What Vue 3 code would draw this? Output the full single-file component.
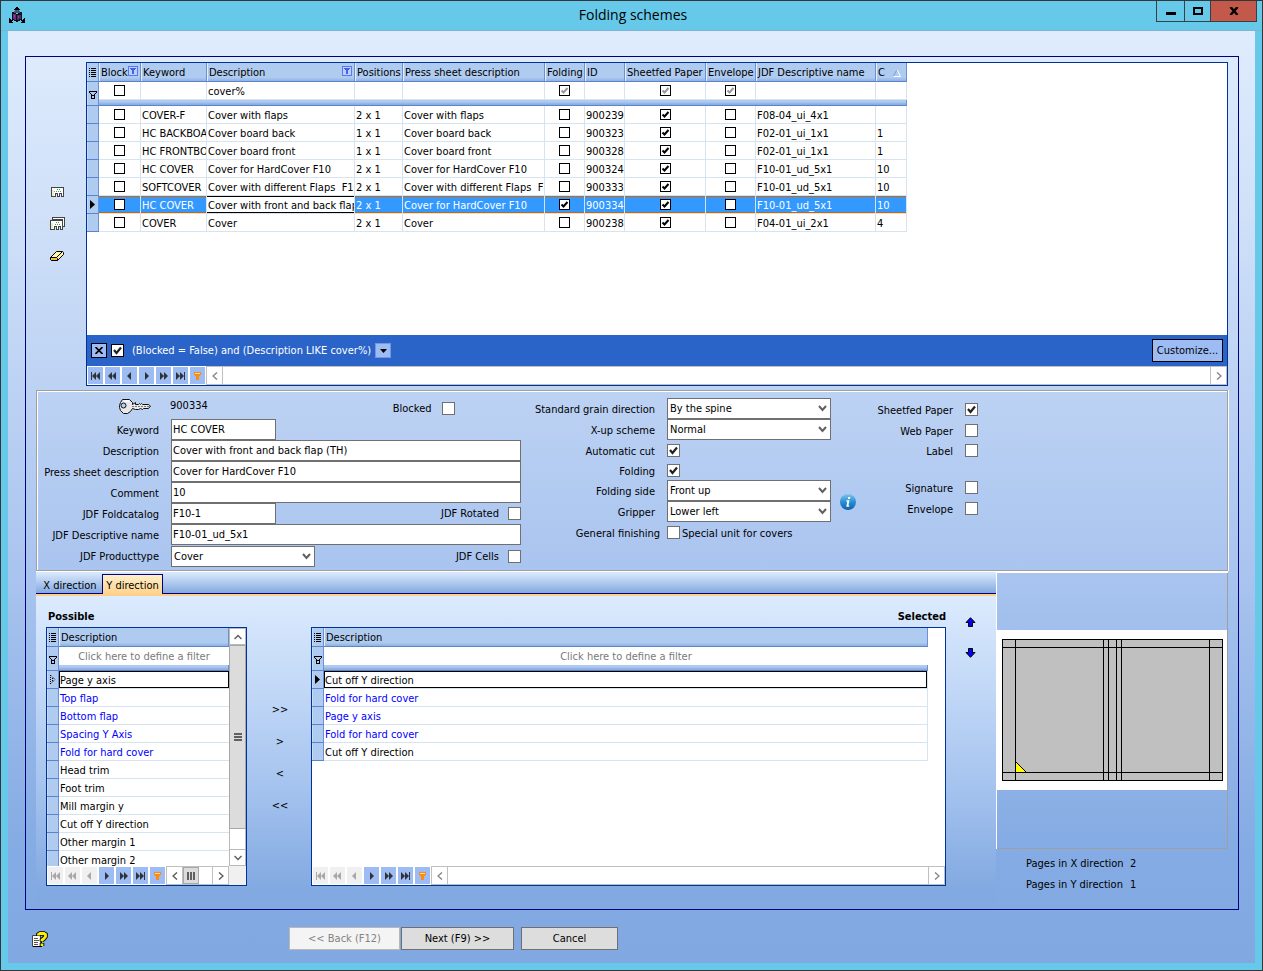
<script setup>
const columns = [
  { key: 'block', label: 'Block', width: 42, type: 'check', filtered: true },
  { key: 'keyword', label: 'Keyword', width: 66 },
  { key: 'description', label: 'Description', width: 148, filtered: true },
  { key: 'positions', label: 'Positions', width: 48 },
  { key: 'press', label: 'Press sheet description', width: 142 },
  { key: 'folding', label: 'Folding', width: 40, type: 'check' },
  { key: 'id', label: 'ID', width: 40 },
  { key: 'sheetfed', label: 'Sheetfed Paper', width: 81, type: 'check' },
  { key: 'envelope', label: 'Envelope', width: 50, type: 'check' },
  { key: 'jdf', label: 'JDF Descriptive name', width: 120 },
  { key: 'c', label: 'C', width: 31, sorted: true },
]

const filterRow = { description: 'cover%' }

const make = (keyword, description, positions, press, id, jdf, c, extra = {}) => ({
  keyword, description, positions, press, id, jdf, c, sheetfed: true, ...extra,
})

const schemes = [
  make('COVER-F', 'Cover with flaps', '2 x 1', 'Cover with flaps', '900239', 'F08-04_ui_4x1', ''),
  make('HC BACKBOARD', 'Cover board back', '1 x 1', 'Cover board back', '900323', 'F02-01_ui_1x1', '1'),
  make('HC FRONTBOARD', 'Cover board front', '1 x 1', 'Cover board front', '900328', 'F02-01_ui_1x1', '1'),
  make('HC COVER', 'Cover for HardCover F10', '2 x 1', 'Cover for HardCover F10', '900324', 'F10-01_ud_5x1', '10'),
  make('SOFTCOVER', 'Cover with different Flaps  F1', '2 x 1', 'Cover with different Flaps  F', '900333', 'F10-01_ud_5x1', '10'),
  make('HC COVER', 'Cover with front and back flap', '2 x 1', 'Cover for HardCover F10', '900334', 'F10-01_ud_5x1', '10', { folding: true, selected: true }),
  make('COVER', 'Cover', '2 x 1', 'Cover', '900238', 'F04-01_ui_2x1', '4'),
]

const nav = [
  { label: 'First', path: 'M3 5h1v8H3z M8 5v8L4 9z M12 5v8L8 9z', back: true },
  { label: 'Previous page', path: 'M7 5v8L3 9z M11 5v8L7 9z', back: true },
  { label: 'Previous', path: 'M9 5v8L5 9z', back: true },
  { label: 'Next', path: 'M6 5v8l4-4z' },
  { label: 'Next page', path: 'M4 5v8l4-4z M8 5v8l4-4z' },
  { label: 'Last', path: 'M3 5v8l4-4z M7 5v8l4-4z M11 5h1v8h-1z' },
]

const textFields = [
  { id: 'keyword', label: 'Keyword', value: 'HC COVER', short: true },
  { id: 'description', label: 'Description', value: 'Cover with front and back flap (TH)' },
  { id: 'press', label: 'Press sheet description', value: 'Cover for HardCover F10' },
  { id: 'comment', label: 'Comment', value: '10' },
  { id: 'foldcatalog', label: 'JDF Foldcatalog', value: 'F10-1', short: true, check: 'JDF Rotated' },
  { id: 'jdfname', label: 'JDF Descriptive name', value: 'F10-01_ud_5x1' },
]

const options = [
  { id: 'grain', label: 'Standard grain direction', select: 'By the spine' },
  { id: 'xup', label: 'X-up scheme', select: 'Normal' },
  { id: 'cut', label: 'Automatic cut', checked: true },
  { id: 'fold', label: 'Folding', checked: true, low: true },
  { id: 'side', label: 'Folding side', select: 'Front up' },
  { id: 'gripper', label: 'Gripper', select: 'Lower left' },
]

const flags = [
  { id: 'sheet', label: 'Sheetfed Paper', checked: true },
  { id: 'web', label: 'Web Paper' },
  { id: 'label', label: 'Label', low: true },
  { id: 'signature', label: 'Signature', spaced: true },
  { id: 'envelope', label: 'Envelope' },
]

const possible = [
  { text: 'Page y axis', current: true },
  { text: 'Top flap', link: true },
  { text: 'Bottom flap', link: true },
  { text: 'Spacing Y Axis', link: true },
  { text: 'Fold for hard cover', link: true },
  { text: 'Head trim' },
  { text: 'Foot trim' },
  { text: 'Mill margin y' },
  { text: 'Cut off Y direction' },
  { text: 'Other margin 1' },
  { text: 'Other margin 2' },
]

const selected = [
  { text: 'Cut off Y direction', current: true },
  { text: 'Fold for hard cover', link: true },
  { text: 'Page y axis', link: true },
  { text: 'Fold for hard cover', link: true },
  { text: 'Cut off Y direction' },
]

const moves = ['>>', '>', '<', '<<']
const sheetX = [18, 106, 111, 119, 124, 212]
const sheetY = [17, 142]
</script>

<template>
  <div class="window">
    <header class="titlebar">
      <svg class="app-icon" width="16" height="16" viewBox="0 0 16 16" shape-rendering="crispEdges" aria-hidden="true">
        <path fill="#000" d="M7 0h2v1h1v1h1v1H9v2H7V3H5V2h1V1h1z" />
        <path fill="#3a5a78" d="M5 4h6v2H5zM6 3h4v1H6z" />
        <path fill="#111" d="M3 5h2v1h2v1h2V6h2V5h2v8h-2v1H9v1H7v-1H5v-1H3z" />
        <path fill="#6b2a86" d="M4 7h3v6H5v-1H4z" />
        <path fill="#4b2a7a" d="M8 8h4v4h-2v1H8z" />
        <path fill="#a83a78" d="M5 8h1v2H5zM9 9h1v2H9z" />
        <path fill="#000" d="M0 11h1v1h1v1h1v-1h1v2H3v1h1v1H0zM16 11h-1v1h-1v1h-1v-1h-1v2h1v1h-1v1h4z" />
      </svg>
      <h1 class="title">Folding schemes</h1>
      <div class="win-buttons">
        <button type="button" class="win-btn min" aria-label="Minimize"><span class="min-mark"></span></button>
        <button type="button" class="win-btn max" aria-label="Maximize"><span class="max-mark"></span></button>
        <button type="button" class="win-btn close" aria-label="Close">
          <svg width="10" height="8" viewBox="0 0 10 8" aria-hidden="true"><path fill="none" stroke="#000" stroke-width="2.4" d="M1.5 0L8.5 8M8.5 0L1.5 8" /></svg>
        </button>
      </div>
    </header>

    <main class="client">
      <section class="panel">
        <div class="top">
          <div class="tools">
            <button type="button" class="tool" aria-label="Find">
              <svg width="16" height="14" viewBox="0 0 16 14" shape-rendering="crispEdges" aria-hidden="true">
                <path fill="#fff" stroke="#444" d="M2.500 2.500h12v9h-2v-3h-2v3h-2v-3h-2v3h-4z" />
                <path fill="#eeeec4" d="M3 5h2v6H3z" />
                <path fill="#3aa84a" d="M8 4h1v1H8zM10 4h1v1h-1zM7 6h1v1H7zM9 6h1v1H9zM11 6h1v1h-1z" />
                <path fill="#999" d="M5 6h1v1H5z" />
              </svg>
            </button>
            <button type="button" class="tool" aria-label="Find all">
              <svg width="16" height="14" viewBox="0 0 16 14" shape-rendering="crispEdges" aria-hidden="true">
                <path fill="#fff" stroke="#444" d="M3.500 2.500v-2h12v9h-2v-7z" />
                <path fill="#fff" stroke="#444" d="M1.500 3.500h12v9h-2v-3h-2v3h-2v-3h-2v3h-4z" />
                <path fill="#eeeec4" d="M2 6h2v6H2z" />
                <path fill="#3aa84a" d="M7 5h1v1H7zM9 5h1v1H9zM6 7h1v1H6zM8 7h1v1H8zM10 7h1v1h-1z" />
              </svg>
            </button>
            <button type="button" class="tool" aria-label="Clear">
              <svg width="16" height="14" viewBox="0 0 16 14" aria-hidden="true">
                <path fill="#fff6a8" stroke="#000" d="M1.5 8.5l6-6h6l1 1v2l-6 6h-6l-1-1z" />
                <path fill="#f0c040" stroke="#000" d="M1.5 8.5h6l1 1v2h-6l-1-1z" />
                <path fill="none" stroke="#000" d="M7.5 8.5l6-6" />
              </svg>
            </button>
          </div>

          <div class="grid">
            <div class="grid-body">
              <table class="schemes">
                <colgroup>
                  <col class="ind-col" />
                  <col v-for="c in columns" :key="c.key" :style="{ width: c.width + 'px' }" />
                </colgroup>
                <thead>
                  <tr class="head">
                    <th class="ind" aria-label="Row menu">
                      <svg class="glyph" width="7" height="9" viewBox="0 0 7 9" shape-rendering="crispEdges" aria-hidden="true">
                        <path d="M0 0h1v1H0zM2 0h5v1H2zM0 2h1v1H0zM2 2h5v1H2zM0 4h1v1H0zM2 4h5v1H2zM0 6h1v1H0zM2 6h5v1H2zM0 8h1v1H0zM2 8h5v1H2z" />
                      </svg>
                    </th>
                    <th v-for="c in columns" :key="c.key" scope="col">
                      <div class="th-in">
                        <span>{{ c.label }}</span>
                        <svg v-if="c.filtered" width="10" height="10" viewBox="0 0 10 10" shape-rendering="crispEdges" aria-hidden="true">
                          <path fill="#bcd0fa" stroke="#5a78f0" d="M.5.5h9v9h-9z" />
                          <path fill="#4560e8" d="M2 2h6v1H7v1H6v4H4V4H3V3H2z" />
                        </svg>
                        <svg v-if="c.sorted" class="sort" width="8" height="8" viewBox="0 0 8 8" aria-hidden="true">
                          <path fill="none" stroke="#7b9be0" d="M.5 7L4 .5" />
                          <path fill="none" stroke="#fff" d="M4 .5L7.500 7.500H.5" />
                        </svg>
                      </div>
                    </th>
                  </tr>
                </thead>
                <tbody>
                  <tr class="filter">
                    <td class="ind" rowspan="2">
                      <svg class="glyph low" width="8" height="8" viewBox="0 0 8 8" shape-rendering="crispEdges" aria-hidden="true">
                        <path d="M0 0h8v2H7v1H6v5H2V3H1V2H0zM1 1v1h6V1zM3 5v2h2V5zM2 2v1h1v1h2V3h1V2z" fill-rule="evenodd" />
                      </svg>
                    </td>
                    <td v-for="c in columns" :key="c.key">
                      <input v-if="c.type === 'check'" type="checkbox" class="cell-check" :class="{ grey: c.key !== 'block' }" :checked="c.key !== 'block'" :aria-label="'Filter ' + c.label" />
                      <div v-else class="cell">{{ filterRow[c.key] }}</div>
                    </td>
                  </tr>
                  <tr class="divider"><td :colspan="columns.length"></td></tr>
                  <tr v-for="(row, i) in schemes" :key="i" class="row" :class="{ selected: row.selected }">
                    <td class="ind">
                      <svg v-if="row.selected" class="glyph" width="5" height="9" viewBox="0 0 5 9" aria-hidden="true"><path d="M0 0v9l5-4.500z" /></svg>
                    </td>
                    <td v-for="c in columns" :key="c.key" :class="{ editing: row.selected && c.key === 'description' }">
                      <input v-if="c.type === 'check'" type="checkbox" class="cell-check" :checked="!!row[c.key]" :aria-label="c.label + ' ' + row.id" />
                      <div v-else class="cell">{{ row[c.key] }}</div>
                    </td>
                  </tr>
                </tbody>
              </table>
            </div>
            <div class="filterbar">
              <button type="button" class="fb-x" aria-label="Clear filter">
                <svg width="8" height="7" viewBox="0 0 8 7" aria-hidden="true"><path fill="none" stroke="#000" stroke-width="1.600" d="M.5 0l7 7M7.500 0l-7 7" /></svg>
              </button>
              <input id="filter-on" type="checkbox" class="box dark" checked />
              <label for="filter-on">(Blocked = False) and (Description LIKE cover%)</label>
              <button type="button" class="fb-drop" aria-label="Recent filters">
                <svg width="7" height="4" viewBox="0 0 7 4" aria-hidden="true"><path d="M0 0h7L3.500 4z" /></svg>
              </button>
              <button type="button" class="customize">Customize...</button>
            </div>
            <div class="navbar">
              <div class="nav-set">
                <button v-for="n in nav" :key="n.label" type="button" class="nav-btn" :aria-label="n.label">
                  <svg width="15" height="17" viewBox="0 0 15 17" aria-hidden="true"><path :d="n.path" /></svg>
                </button>
                <button type="button" class="nav-btn" aria-label="Filter">
                  <svg width="15" height="17" viewBox="0 0 15 17" shape-rendering="crispEdges" aria-hidden="true">
                    <path fill="#ff8a10" d="M4 5h7v3h-1v1H9v4H6V9H5V8H4z" /><path fill="#ffe0a8" d="M5 6h5v1H5z" />
                  </svg>
                </button>
              </div>
              <div class="hscroll">
                <button type="button" class="sc-btn" aria-label="Scroll left"><svg width="6" height="8" viewBox="0 0 6 8" aria-hidden="true"><path d="M5 .5L1 4l4 3.500" /></svg></button>
                <div class="track"></div>
                <button type="button" class="sc-btn" aria-label="Scroll right"><svg width="6" height="8" viewBox="0 0 6 8" aria-hidden="true"><path d="M1 .5L5 4 1 7.500" /></svg></button>
              </div>
            </div>
          </div>
        </div>

        <form class="form" @submit.prevent>
          <div class="col-a">
            <div class="id-row">
              <svg class="key" width="34" height="16" viewBox="0 0 34 16" aria-hidden="true">
                <path fill="#e8e8e8" stroke="#111" d="M4.500 1.500h7l3 3v2l3-2v2h3l1-1 1 1 1-1 1 1h6l2 1.500-2 2.500h-5l-1 1-2-1-2 1h-3l-3-1-2 3-3 2h-4l-3-3-1-3v-2l1-3z" />
                <circle cx="5.500" cy="7.500" r="2.500" fill="#b8cff2" stroke="#111" />
                <path fill="none" stroke="#777" d="M14 8.500h18" stroke-dasharray="2 1" />
                <path fill="none" stroke="#fff" stroke-width="1.500" d="M6 3h5" />
              </svg>
              <output class="id-value">900334</output>
              <label for="blocked" class="r-label">Blocked</label>
              <input id="blocked" type="checkbox" class="box" />
            </div>
            <div v-for="f in textFields" :key="f.id" class="field">
              <label :for="f.id" class="label">{{ f.label }}</label>
              <input :id="f.id" type="text" class="text" :class="{ short: f.short }" :value="f.value" />
              <template v-if="f.check">
                <label for="rotated" class="r-label">{{ f.check }}</label>
                <input id="rotated" type="checkbox" class="box" />
              </template>
            </div>
            <div class="field last">
              <label for="producttype" class="label">JDF Producttype</label>
              <select id="producttype" class="select product"><option>Cover</option></select>
              <label for="cells" class="r-label">JDF Cells</label>
              <input id="cells" type="checkbox" class="box" />
            </div>
          </div>

          <div class="col-b">
            <div v-for="o in options" :key="o.id" class="field" :class="{ low: o.low }">
              <label :for="o.id" class="label">{{ o.label }}</label>
              <select v-if="o.select" :id="o.id" class="select"><option>{{ o.select }}</option></select>
              <input v-else :id="o.id" type="checkbox" class="box" checked />
            </div>
            <div class="field finishing">
              <span class="label">General finishing</span>
              <input id="unit" type="checkbox" class="box" />
              <label for="unit" class="unit">Special unit for covers</label>
            </div>
          </div>

          <svg class="info" width="16" height="16" viewBox="0 0 16 16" role="img" aria-label="Information">
            <defs><linearGradient id="info-fill" x1="0" y1="0" x2="0" y2="1"><stop offset="0" stop-color="#7cc6ee" /><stop offset=".5" stop-color="#2a8fd4" /><stop offset="1" stop-color="#0d5fae" /></linearGradient></defs>
            <circle cx="8" cy="8" r="8" fill="url(#info-fill)" />
            <path fill="#fff" d="M8.300 3h2l-.4 2h-2zM6.500 6.200h3l-1.100 5.300h1l-.3 1.300H6.300l1-5.300h-1z" />
          </svg>

          <div class="col-c">
            <div v-for="f in flags" :key="f.id" class="field" :class="{ spaced: f.spaced, low: f.low }">
              <label :for="f.id" class="label">{{ f.label }}</label>
              <input :id="f.id" type="checkbox" class="box" :checked="f.checked" />
            </div>
          </div>
        </form>

        <div class="bottom">
          <div class="tabpane">
            <div class="tabs" role="tablist">
              <button type="button" role="tab" class="tab" aria-selected="false">X direction</button>
              <button type="button" role="tab" class="tab active" aria-selected="true">Y direction</button>
            </div>
            <div class="lists">
              <h2 class="list-title">Possible</h2>
              <h2 class="list-title right">Selected</h2>

              <div class="list">
                <div class="list-main">
                  <div class="list-view">
                    <table class="items">
                      <colgroup><col class="ind-col" /><col /></colgroup>
                      <thead>
                        <tr class="head">
                          <th class="ind" aria-label="Row menu">
                            <svg class="glyph" width="7" height="9" viewBox="0 0 7 9" shape-rendering="crispEdges" aria-hidden="true">
                              <path d="M0 0h1v1H0zM2 0h5v1H2zM0 2h1v1H0zM2 2h5v1H2zM0 4h1v1H0zM2 4h5v1H2zM0 6h1v1H0zM2 6h5v1H2zM0 8h1v1H0zM2 8h5v1H2z" />
                            </svg>
                          </th>
                          <th scope="col"><div class="th-in"><span>Description</span></div></th>
                        </tr>
                      </thead>
                      <tbody>
                        <tr class="filter">
                          <td class="ind" rowspan="2">
                            <svg class="glyph low" width="8" height="8" viewBox="0 0 8 8" shape-rendering="crispEdges" aria-hidden="true">
                              <path d="M0 0h8v2H7v1H6v5H2V3H1V2H0zM1 1v1h6V1zM3 5v2h2V5zM2 2v1h1v1h2V3h1V2z" fill-rule="evenodd" />
                            </svg>
                          </td>
                          <td class="hint"><div class="cell">Click here to define a filter</div></td>
                        </tr>
                        <tr class="divider"><td></td></tr>
                        <tr v-for="(it, i) in possible" :key="i" class="row">
                          <td class="ind">
                            <svg v-if="it.current" class="glyph" width="6" height="9" viewBox="0 0 6 9" aria-hidden="true"><path fill="none" stroke="#000" stroke-dasharray="1 1" d="M.5 0v9M1 .5l4 4-4 4M2.500 3v3" /></svg>
                          </td>
                          <td :class="{ link: it.link, current: it.current }"><div class="cell">{{ it.text }}</div></td>
                        </tr>
                      </tbody>
                    </table>
                  </div>
                  <div class="vscroll">
                    <button type="button" class="vs-btn" aria-label="Scroll up"><svg width="8" height="6" viewBox="0 0 8 6" aria-hidden="true"><path d="M.5 5L4 1.500 7.500 5" /></svg></button>
                    <div class="vs-thumb"><span></span><span></span><span></span></div>
                    <div class="vs-track"></div>
                    <button type="button" class="vs-btn" aria-label="Scroll down"><svg width="8" height="6" viewBox="0 0 8 6" aria-hidden="true"><path d="M.5 1L4 4.500 7.500 1" /></svg></button>
                  </div>
                </div>
                <div class="navbar">
                  <div class="nav-set">
                    <button v-for="n in nav" :key="n.label" type="button" class="nav-btn" :disabled="n.back" :aria-label="n.label">
                      <svg width="15" height="17" viewBox="0 0 15 17" aria-hidden="true"><path :d="n.path" /></svg>
                    </button>
                    <button type="button" class="nav-btn" aria-label="Filter">
                      <svg width="15" height="17" viewBox="0 0 15 17" shape-rendering="crispEdges" aria-hidden="true">
                        <path fill="#ff8a10" d="M4 5h7v3h-1v1H9v4H6V9H5V8H4z" /><path fill="#ffe0a8" d="M5 6h5v1H5z" />
                      </svg>
                    </button>
                  </div>
                  <div class="hscroll">
                    <button type="button" class="sc-btn dark" aria-label="Scroll left"><svg width="6" height="8" viewBox="0 0 6 8" aria-hidden="true"><path d="M5 .5L1 4l4 3.500" /></svg></button>
                    <div class="hs-thumb"><span></span><span></span><span></span></div>
                    <div class="track"></div>
                    <button type="button" class="sc-btn dark" aria-label="Scroll right"><svg width="6" height="8" viewBox="0 0 6 8" aria-hidden="true"><path d="M1 .5L5 4 1 7.500" /></svg></button>
                  </div>
                  <div class="corner"></div>
                </div>
              </div>

              <div class="moves">
                <button v-for="m in moves" :key="m" type="button" class="move">{{ m }}</button>
              </div>

              <div class="list">
                <div class="list-main">
                  <div class="list-view wide">
                    <table class="items">
                      <colgroup><col class="ind-col" /><col /></colgroup>
                      <thead>
                        <tr class="head">
                          <th class="ind" aria-label="Row menu">
                            <svg class="glyph" width="7" height="9" viewBox="0 0 7 9" shape-rendering="crispEdges" aria-hidden="true">
                              <path d="M0 0h1v1H0zM2 0h5v1H2zM0 2h1v1H0zM2 2h5v1H2zM0 4h1v1H0zM2 4h5v1H2zM0 6h1v1H0zM2 6h5v1H2zM0 8h1v1H0zM2 8h5v1H2z" />
                            </svg>
                          </th>
                          <th scope="col"><div class="th-in"><span>Description</span></div></th>
                        </tr>
                      </thead>
                      <tbody>
                        <tr class="filter">
                          <td class="ind" rowspan="2">
                            <svg class="glyph low" width="8" height="8" viewBox="0 0 8 8" shape-rendering="crispEdges" aria-hidden="true">
                              <path d="M0 0h8v2H7v1H6v5H2V3H1V2H0zM1 1v1h6V1zM3 5v2h2V5zM2 2v1h1v1h2V3h1V2z" fill-rule="evenodd" />
                            </svg>
                          </td>
                          <td class="hint"><div class="cell">Click here to define a filter</div></td>
                        </tr>
                        <tr class="divider"><td></td></tr>
                        <tr v-for="(it, i) in selected" :key="i" class="row">
                          <td class="ind">
                            <svg v-if="it.current" class="glyph" width="5" height="9" viewBox="0 0 5 9" aria-hidden="true"><path d="M0 0v9l5-4.500z" /></svg>
                          </td>
                          <td class="edge" :class="{ link: it.link, current: it.current }"><div class="cell">{{ it.text }}</div></td>
                        </tr>
                      </tbody>
                    </table>
                  </div>
                </div>
                <div class="navbar">
                  <div class="nav-set">
                    <button v-for="n in nav" :key="n.label" type="button" class="nav-btn" :disabled="n.back" :aria-label="n.label">
                      <svg width="15" height="17" viewBox="0 0 15 17" aria-hidden="true"><path :d="n.path" /></svg>
                    </button>
                    <button type="button" class="nav-btn" aria-label="Filter">
                      <svg width="15" height="17" viewBox="0 0 15 17" shape-rendering="crispEdges" aria-hidden="true">
                        <path fill="#ff8a10" d="M4 5h7v3h-1v1H9v4H6V9H5V8H4z" /><path fill="#ffe0a8" d="M5 6h5v1H5z" />
                      </svg>
                    </button>
                  </div>
                  <div class="hscroll">
                    <button type="button" class="sc-btn" aria-label="Scroll left"><svg width="6" height="8" viewBox="0 0 6 8" aria-hidden="true"><path d="M5 .5L1 4l4 3.500" /></svg></button>
                    <div class="track"></div>
                    <button type="button" class="sc-btn" aria-label="Scroll right"><svg width="6" height="8" viewBox="0 0 6 8" aria-hidden="true"><path d="M1 .5L5 4 1 7.500" /></svg></button>
                  </div>
                </div>
              </div>

              <div class="order">
                <button type="button" class="order-btn" aria-label="Move up">
                  <svg width="11" height="10" viewBox="0 0 11 10" aria-hidden="true"><path fill="#00f" stroke="#000" d="M5.500 .7L10 5.500H7.500v4h-4v-4H1z" /></svg>
                </button>
                <button type="button" class="order-btn" aria-label="Move down">
                  <svg width="11" height="10" viewBox="0 0 11 10" aria-hidden="true"><path fill="#00f" stroke="#000" d="M5.500 9.300L10 4.500H7.500v-4h-4v4H1z" /></svg>
                </button>
              </div>
            </div>
          </div>

          <aside class="side">
            <div class="preview">
              <div class="paper">
                <svg width="230" height="160" viewBox="0 0 230 160" shape-rendering="crispEdges" role="img" aria-label="Sheet layout">
                  <path fill="#c0c0c0" stroke="#000" d="M5.500 9.500h220v141H5.500z" />
                  <path fill="#ff0" d="M18 131v12h12z" />
                  <path fill="none" stroke="#000" d="M18.500 131.500l11 11" />
                  <line v-for="x in sheetX" :key="'x' + x" :x1="x + 0.5" :x2="x + 0.5" y1="9" y2="151" stroke="#000" />
                  <line v-for="y in sheetY" :key="'y' + y" x1="5" x2="226" :y1="y + 0.5" :y2="y + 0.5" stroke="#000" />
                </svg>
              </div>
            </div>
            <dl class="pages">
              <dt>Pages in X direction</dt><dd>2</dd>
              <dt>Pages in Y direction</dt><dd>1</dd>
            </dl>
          </aside>
        </div>
      </section>

      <footer class="footer">
        <button type="button" class="help" aria-label="Help">
          <svg width="16" height="16" viewBox="0 0 16 16" aria-hidden="true">
            <path fill="#fff" stroke="#444" d="M.5 4.500h8v11h-8z" />
            <path fill="none" stroke="#000" d="M9 15.500H1M9.500 9v7" />
            <path fill="none" stroke="#555" d="M2 7.500h4M2 9.500h5M2 11.500h4M2 13.500h4" />
            <path fill="none" stroke="#000" stroke-width="4.600" d="M6.500 5V3.500L8 2.500h4l1.500 1v2L11.500 8l-1.500 1v1.500M10 12v3" />
            <path fill="none" stroke="#ffee00" stroke-width="2.800" d="M6.500 4.500v-1L8 2.500h4l1.500 1v2L11.500 8l-1.500 1v1.200M10 12.500V15" />
          </svg>
        </button>
        <div class="actions">
          <button type="button" class="btn back" disabled>&lt;&lt; Back (F12)</button>
          <button type="button" class="btn next">Next (F9) &gt;&gt;</button>
          <button type="button" class="btn cancel">Cancel</button>
        </div>
      </footer>
    </main>
  </div>
</template>

<style>
body { margin: 0; }
</style>

<style scoped>
.window, .window * { box-sizing: border-box; }
.window {
  display: flex; flex-direction: column; min-height: 100vh;
  border: 1px solid #33373a; background: #66c9ea; color: #000;
  font-family: "DejaVu Sans Condensed", "DejaVu Sans", sans-serif; font-size: 11px; line-height: 16px;
}
button, input, select, output { font: inherit; color: inherit; margin: 0; }
button { padding: 0; border: 0; background: none; display: flex; align-items: center; justify-content: center; white-space: nowrap; }
svg { display: block; flex: none; }

.titlebar { display: grid; grid-template-columns: 1fr auto 1fr; height: 30px; padding: 0 5px 0 8px; border-bottom: 1px solid #7fb3cf; }
.app-icon { margin-top: 6px; }
.title { margin: 0; font: 400 14px/28px "Open Sans", "Noto Sans", sans-serif; }
.win-buttons { display: flex; justify-content: flex-end; align-items: flex-start; }
.win-btn { height: 21px; border: solid #3b3f42; border-width: 0 0 1px 1px; }
.min { width: 28px; }
.max { width: 26px; }
.close { width: 47px; border-right-width: 1px; background: #c2594b; }
.min-mark { width: 10px; height: 3px; margin-top: 4px; background: #000; }
.max-mark { width: 10px; height: 8px; border: 2px solid #000; }

.client {
  flex: 1; display: flex; flex-direction: column; margin: 0 7px 7px; padding-top: 25px;
  background: linear-gradient(#dfecfd, #cfe0f8 20%, #a9c4ef 58%, #84abe3 88%, #82a8e1);
}
.panel { flex: 1; display: flex; flex-direction: column; margin: 0 16px 0 17px; padding: 5px 10px 0; border: 1px solid #000080; }

.top { display: flex; margin-bottom: 4px; }
.tools { width: 50px; display: flex; flex-direction: column; align-items: center; gap: 18px; padding: 123px 8px 0 0; }
.tool { height: 14px; }

.grid { flex: 1; min-width: 0; border: 1px solid #003399; background: #fff; }
.grid-body { min-height: 272px; overflow: hidden; }
table { border-collapse: separate; border-spacing: 0; table-layout: fixed; }
.schemes { width: 820px; }
.items { width: 100%; }
.ind-col { width: 12px; }
th, td { padding: 0; text-align: left; font-weight: 400; vertical-align: middle; }
.head th {
  height: 19px; border-right: 1px solid #6a90d8; border-bottom: 1px solid #5b84cc;
  background: linear-gradient(#afcbf0 80%, #8fb2e4); box-shadow: inset 1px 0 #e4effc;
}
.th-in { display: flex; justify-content: space-between; align-items: center; height: 18px; padding: 2px 2px 0 2px; overflow: hidden; white-space: nowrap; }
.th-in svg { margin-bottom: 4px; }
.th-in .sort { margin: 0 3px 0 0; }
.filter td, .row td { height: 18px; border-right: 1px solid #d6e3f1; border-bottom: 1px solid #d6e3f1; }
.filter td.ind, .row td.ind, .head th.ind { border-right-color: #6a90d8; border-bottom-color: #5b84cc; background: #afcbf0; box-shadow: inset 1px 0 #c6dbf6; }
.divider td { height: 6px; background: linear-gradient(#afcbf0 30%, #8aade3 90%); border-bottom: 1px solid #5b84cc; border-right: 1px solid #6a90d8; line-height: 0; }
.glyph { margin: 0 auto; }
.glyph.low { margin-top: 2px; margin-left: 2px; }
.cell { height: 17px; line-height: 19px; padding-left: 1px; overflow: hidden; white-space: pre; }
.cell-check {
  appearance: none; display: block; width: 11px; height: 11px; margin: 0 auto; border: 1px solid #000; border-radius: 0; background: #fff center / 9px 9px no-repeat;
}
.cell-check:checked { background-image: url("data:image/svg+xml,%3Csvg xmlns='http://www.w3.org/2000/svg' viewBox='0 0 9 9'%3E%3Cpath d='M1.500 4.500l2 2 4-4.500' fill='none' stroke='%23000' stroke-width='2'/%3E%3C/svg%3E"); }
.cell-check.grey:checked { background-image: url("data:image/svg+xml,%3Csvg xmlns='http://www.w3.org/2000/svg' viewBox='0 0 9 9'%3E%3Cpath d='M1.500 4.500l2 2 4-4.500' fill='none' stroke='%23999' stroke-width='2'/%3E%3C/svg%3E"); }
.selected td:not(.ind) { background: #3399ff; color: #fff; box-shadow: inset 0 1px #cc6600, inset 0 -1px #cc6600; }
.selected td.editing:not(.ind) { background: #fff; color: #000; box-shadow: inset 0 1px #000, inset 0 -1px #000; }

.filterbar { display: flex; align-items: center; height: 31px; padding: 0 4px; background: #2a64c8; color: #fff; }
.fb-x { width: 16px; height: 15px; margin-right: 4px; border: 1px solid #000; background: #9ebcf4; }
.filterbar label { margin: 0 4px 0 8px; padding-top: 1px; }
.fb-drop { width: 16px; height: 15px; border: 1px solid #7396e6; background: #9ebcf4; }
.customize { width: 71px; height: 23px; margin-left: auto; border: 1px solid #000; background: #9ebcf4; color: #000; }

.navbar { display: flex; align-items: center; height: 19px; background: #fff; }
.nav-set { display: flex; gap: 2px; padding: 0 1px; }
.nav-btn { width: 15px; height: 17px; background: #9ebcf4; fill: #2f3338; }
.nav-btn:disabled { background: #f0f0f0; fill: #a8a8a8; }
.hscroll { flex: 1; display: flex; height: 19px; border: 1px solid #c0c0c0; }
.sc-btn { width: 16px; border-right: 1px solid #c0c0c0; }
.sc-btn:last-child { border-right: 0; border-left: 1px solid #c0c0c0; }
.sc-btn svg, .vs-btn svg { fill: none; stroke: #8a8a8a; stroke-width: 1.5; }
.sc-btn.dark svg, .vs-btn svg { stroke: #606060; }
.track { flex: 1; }

.box {
  appearance: none; flex: none; width: 13px; height: 13px; border: 1px solid #707070; border-radius: 0; background: #fff center / 11px 11px no-repeat;
}
.box.dark { border-color: #000; }
.box:checked { background-image: url("data:image/svg+xml,%3Csvg xmlns='http://www.w3.org/2000/svg' viewBox='0 0 11 11'%3E%3Cpath d='M2 5l2.500 3L9 2.500' fill='none' stroke='%23222' stroke-width='2.200'/%3E%3C/svg%3E"); }

.form { display: flex; height: 181px; margin: 0 0 1px; border: 1px solid #a0a0a0; box-shadow: inset 1px 1px #fff, 0 1px #fff, 1px 0 #fff; }
.field { display: flex; align-items: center; height: 21px; }
.label { text-align: right; white-space: nowrap; padding-top: 2px; }
.col-a { width: 484px; }
.col-a .label { width: 122px; margin-right: 12px; }
.id-row { display: flex; align-items: center; height: 28px; padding: 1px 0 0 81px; }
.key { margin-right: 18px; }
.r-label { margin-left: auto; margin-right: 9px; }
.id-row .r-label { margin-left: 185px; margin-right: 10px; padding-top: 7px; }
.id-row .box { margin-top: 6px; }
.text { width: 350px; height: 21px; padding: 0 1px; border: 1px solid #707070; border-radius: 0; background: #fff; }
.text.short { width: 105px; }
.col-a .last { margin-top: 1px; }
.last .label { padding-top: 0; }
.select {
  appearance: none; width: 164px; height: 21px; padding: 1px 18px 0 2px; border: 1px solid #707070; border-radius: 0;
  background: #fff url("data:image/svg+xml,%3Csvg xmlns='http://www.w3.org/2000/svg' width='9' height='7' viewBox='0 0 9 7'%3E%3Cpath d='M1 1l3.500 4L8 1' fill='none' stroke='%23606060' stroke-width='2'/%3E%3C/svg%3E") right 3px center no-repeat;
}
.select.product { width: 144px; }
.col-b { padding-top: 7px; width: 310px; }
.col-b .label { width: 134px; margin-right: 12px; }
.col-b .low, .col-c .low { height: 19px; }
.col-b .finishing .label { width: 139px; margin-right: 7px; }
.unit { margin-left: 2px; padding-top: 2px; }
.info { margin: 103px 0 0 9px; }
.col-c { padding-top: 8px; width: 122px; }
.col-c .field { justify-content: flex-end; gap: 12px; }
.col-c .spaced { margin-top: 17px; }

.bottom { flex: 1; display: flex; }
.tabpane { flex: 1; min-width: 0; display: flex; flex-direction: column; }
.tabs { display: flex; align-items: flex-end; height: 24px; padding-left: 2px; border-bottom: 2px solid #ffcf8a; background: linear-gradient(#dcebfd, #84a9e0 21px, #000080 21px); }
.tab { width: 64px; height: 20px; padding-top: 3px; }
.tab.active { width: 61px; border: 1px solid #000080; border-bottom: 0; background: linear-gradient(#ffefc8, #ffd28c); }
.lists {
  flex: 1; display: grid; grid-template-columns: 201px 64px minmax(0, 1fr) 50px; grid-template-rows: 31px 259px; padding-left: 10px;
  background: linear-gradient(#dcebfe, #a6c4ef 60%, #82a9e1 94%, #82a9e1);
}
.list-title { margin: 0; padding: 13px 0 0 2px; font-size: 11px; line-height: 16px; font-weight: 700; }
.list-title.right { grid-column: 3; text-align: right; padding: 13px 0 0; }
.list { grid-row: 2; display: flex; flex-direction: column; min-width: 0; border: 1px solid #003399; background: #fff; }
.list-main { flex: 1; min-height: 0; display: flex; overflow: hidden; }
.list-view { flex: 1; min-width: 0; }
.list-view.wide { margin-right: 17px; }
.items .row td:not(.ind) { border-right: 0; }
.items .row td.edge { border-right: 1px solid #d6e3f1; }
.filter td.hint { text-align: center; color: #7a7a7a; border-color: #fff; }
.link { color: #0000ff; }
.items .row td.current { box-shadow: inset 0 0 0 1px #000; }

.vscroll { width: 17px; display: flex; flex-direction: column; }
.vs-btn { height: 17px; border: 1px solid #b8b8b8; }
.vs-thumb { flex: 1; display: flex; flex-direction: column; align-items: center; justify-content: center; gap: 1px; border: 1px solid #a8a8a8; background: #dcdcdc; }
.vs-thumb span { width: 8px; height: 2px; background: #606060; }
.vs-track { height: 20px; border: solid #b8b8b8; border-width: 0 1px; }
.hs-thumb { width: 16px; display: flex; align-items: center; justify-content: center; gap: 1px; border: 1px solid #a8a8a8; background: #dcdcdc; }
.hs-thumb span { width: 2px; height: 8px; background: #606060; }
.corner { width: 17px; height: 19px; background: #f0f0f0; }

.moves { grid-row: 2; display: flex; flex-direction: column; align-items: center; padding: 67px 0 0 2px; }
.move { width: 32px; height: 32px; }
.order { grid-column: 4; grid-row: 1 / 3; display: flex; flex-direction: column; align-items: center; padding: 10px 1px 0 0; }
.order-btn { width: 31px; height: 31px; }

.side { width: 232px; }
.preview { height: 277px; padding-top: 57px; border: solid #fff; border-width: 1px 0 0 1px; box-shadow: inset -1px -1px #a0a0a0; }
.paper { margin-right: 1px; background: #fff; }
.paper svg { margin: 0 auto; }
.pages { display: grid; grid-template-columns: 104px auto; justify-content: start; margin: 0; padding: 4px 0 0 30px; line-height: 21px; }
.pages dt { white-space: nowrap; }
.pages dd { margin: 0; }

.footer { display: flex; align-items: center; height: 53px; padding: 4px 16px 0 24px; }
.help { margin-right: 241px; }
.actions { display: flex; }
.btn { height: 23px; padding-top: 1px; border: 1px solid #707070; background: #dddddd; }
.back { width: 111px; margin-right: 1px; border-color: #b8b8b8; background: #f4f4f4; color: #838383; }
.next { width: 113px; margin-right: 7px; }
.cancel { width: 97px; }
</style>
